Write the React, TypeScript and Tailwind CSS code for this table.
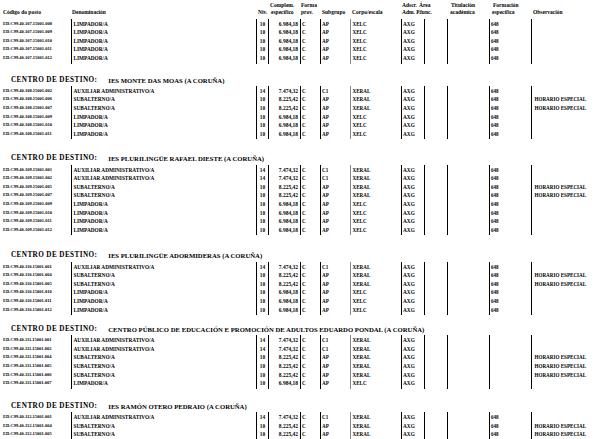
type Post = {
  code: string;
  name: string;
  niv: string;
  comp: string;
  group: string;
  corpo: string;
  f648: boolean;
  obs?: string;
};

type Section = {
  title?: string;
  gap: string;
  rows: Post[];
};

const aux = (code: string, f648 = true): Post => ({
  code,
  name: "AUXILIAR ADMINISTRATIVO/A",
  niv: "14",
  comp: "7.474,32",
  group: "C1",
  corpo: "XERAL",
  f648,
});

const sub = (code: string, f648 = true): Post => ({
  code,
  name: "SUBALTERNO/A",
  niv: "10",
  comp: "8.225,42",
  group: "AP",
  corpo: "XERAL",
  f648,
  obs: "HORARIO ESPECIAL",
});

const lim = (code: string, f648 = true): Post => ({
  code,
  name: "LIMPADOR/A",
  niv: "10",
  comp: "6.984,18",
  group: "AP",
  corpo: "XELC",
  f648,
});

const sections: Section[] = [
  {
    gap: "mt-[2.7px]",
    rows: ["008", "009", "010", "011", "012"].map(n => lim(`ED.C99.40.107.15001.${n}`)),
  },
  {
    title: "IES MONTE DAS MOAS (A CORUÑA)",
    gap: "mt-[12px]",
    rows: [
      aux("ED.C99.40.108.15001.002"),
      sub("ED.C99.40.108.15001.006"),
      sub("ED.C99.40.108.15001.007"),
      lim("ED.C99.40.108.15001.009"),
      lim("ED.C99.40.108.15001.010"),
      lim("ED.C99.40.108.15001.011"),
    ],
  },
  {
    title: "IES PLURILINGÜE RAFAEL DIESTE (A CORUÑA)",
    gap: "mt-[15px]",
    rows: [
      aux("ED.C99.40.109.15001.001"),
      aux("ED.C99.40.109.15001.002"),
      sub("ED.C99.40.109.15001.005"),
      sub("ED.C99.40.109.15001.007"),
      lim("ED.C99.40.109.15001.009"),
      lim("ED.C99.40.109.15001.010"),
      lim("ED.C99.40.109.15001.011"),
      lim("ED.C99.40.109.15001.012"),
    ],
  },
  {
    title: "IES PLURILINGÜE ADORMIDERAS (A CORUÑA)",
    gap: "mt-[16px]",
    rows: [
      aux("ED.C99.40.110.15001.001"),
      sub("ED.C99.40.110.15001.004"),
      sub("ED.C99.40.110.15001.005"),
      lim("ED.C99.40.110.15001.010"),
      lim("ED.C99.40.110.15001.011"),
      lim("ED.C99.40.110.15001.012"),
    ],
  },
  {
    title: "CENTRO PÚBLICO DE EDUCACIÓN E PROMOCIÓN DE ADULTOS EDUARDO PONDAL (A CORUÑA)",
    gap: "mt-[10px]",
    rows: [
      aux("ED.C99.40.111.15001.001", false),
      aux("ED.C99.40.111.15001.002", false),
      sub("ED.C99.40.111.15001.004", false),
      sub("ED.C99.40.111.15001.005", false),
      sub("ED.C99.40.111.15001.006", false),
      lim("ED.C99.40.111.15001.007", false),
    ],
  },
  {
    title: "IES RAMÓN OTERO PEDRAIO (A CORUÑA)",
    gap: "mt-[13px]",
    rows: [
      aux("ED.C99.40.112.15001.001"),
      sub("ED.C99.40.112.15001.004"),
      sub("ED.C99.40.112.15001.005"),
    ],
  },
];

function Cells({ post, className }: { post?: Post; className: string }) {
  return (
    <div className={`flex whitespace-nowrap ${className}`}>
      <div className="w-[71px] shrink-0 pl-[3px] text-[4.5px]">{post?.code}</div>
      <div className="w-[185px] shrink-0 border-l border-black pl-[1.5px] text-[5.3px]">{post?.name}</div>
      <div className="w-[12px] shrink-0 border-l border-black text-center text-[5.3px]">{post?.niv}</div>
      <div className="w-[32px] shrink-0 border-l border-black pr-[2px] text-right text-[5.5px]">{post?.comp}</div>
      <div className="w-[20px] shrink-0 border-l border-black pl-[1px]">{post && "C"}</div>
      <div className="w-[30px] shrink-0 border-l border-black pl-[1px]">{post?.group}</div>
      <div className="w-[51px] shrink-0 border-l border-[#8a8a8a] pl-[1.5px]">{post?.corpo}</div>
      <div className="w-[23px] shrink-0 border-l border-black pl-[1px] text-[5.3px]">{post && "AXG"}</div>
      <div className="w-[23px] shrink-0 border-l border-black" />
      <div className="w-[42px] shrink-0 border-l border-black" />
      <div className="w-[42px] shrink-0 border-l border-black pl-[1px]">{post?.f648 && "648"}</div>
      <div className="flex-1 border-l border-black pl-[2.5px]">{post?.obs}</div>
    </div>
  );
}

export default function App() {
  return (
    <div className="h-[439px] w-[616px] overflow-hidden bg-white font-['Liberation_Serif',serif] font-bold text-black">
      <div className="pt-[2px] text-[5.5px] leading-[7px] whitespace-nowrap">
        <div className="flex">
          <div className="w-[270px] shrink-0" />
          <div className="w-[31px] shrink-0">Complem.</div>
          <div className="w-[101px] shrink-0">Forma</div>
          <div className="w-[17px] shrink-0">Adscr.</div>
          <div className="w-[32px] shrink-0">Área</div>
          <div className="w-[42px] shrink-0">Titulación</div>
          <div>Formación</div>
        </div>
        <div className="flex">
          <div className="w-[72px] shrink-0 pl-[3px]">Código do posto</div>
          <div className="w-[186px] shrink-0">Denominación</div>
          <div className="w-[13px] shrink-0">Niv.</div>
          <div className="w-[30px] shrink-0">específico</div>
          <div className="w-[21px] shrink-0">prov.</div>
          <div className="w-[30px] shrink-0">Subgrupo</div>
          <div className="w-[50px] shrink-0">Corpo/escala</div>
          <div className="w-[18px] shrink-0">Adm. P.</div>
          <div className="w-[30px] shrink-0">func.</div>
          <div className="w-[42px] shrink-0">académica</div>
          <div className="w-[41px] shrink-0">específica</div>
          <div>Observación</div>
        </div>
      </div>

      {sections.map((section, i) => (
        <div key={i} className={section.gap}>
          {section.title && (
            <div className="flex h-[9px] items-center whitespace-nowrap pl-[11px] text-[7.2px] leading-[9px]">
              <span className="tracking-[0.4px]">CENTRO DE DESTINO:</span>
              <span className="ml-[11px] text-[6.7px]">{section.title}</span>
            </div>
          )}
          <div className={section.title ? "mt-[1.2px]" : ""}>
            <Cells className="h-[1px]" />
            {section.rows.map(post => (
              <Cells key={post.code} post={post} className="h-[8.6px] text-[5.1px] leading-[8.6px]" />
            ))}
            <Cells className="h-[1px]" />
          </div>
        </div>
      ))}
    </div>
  );
}
